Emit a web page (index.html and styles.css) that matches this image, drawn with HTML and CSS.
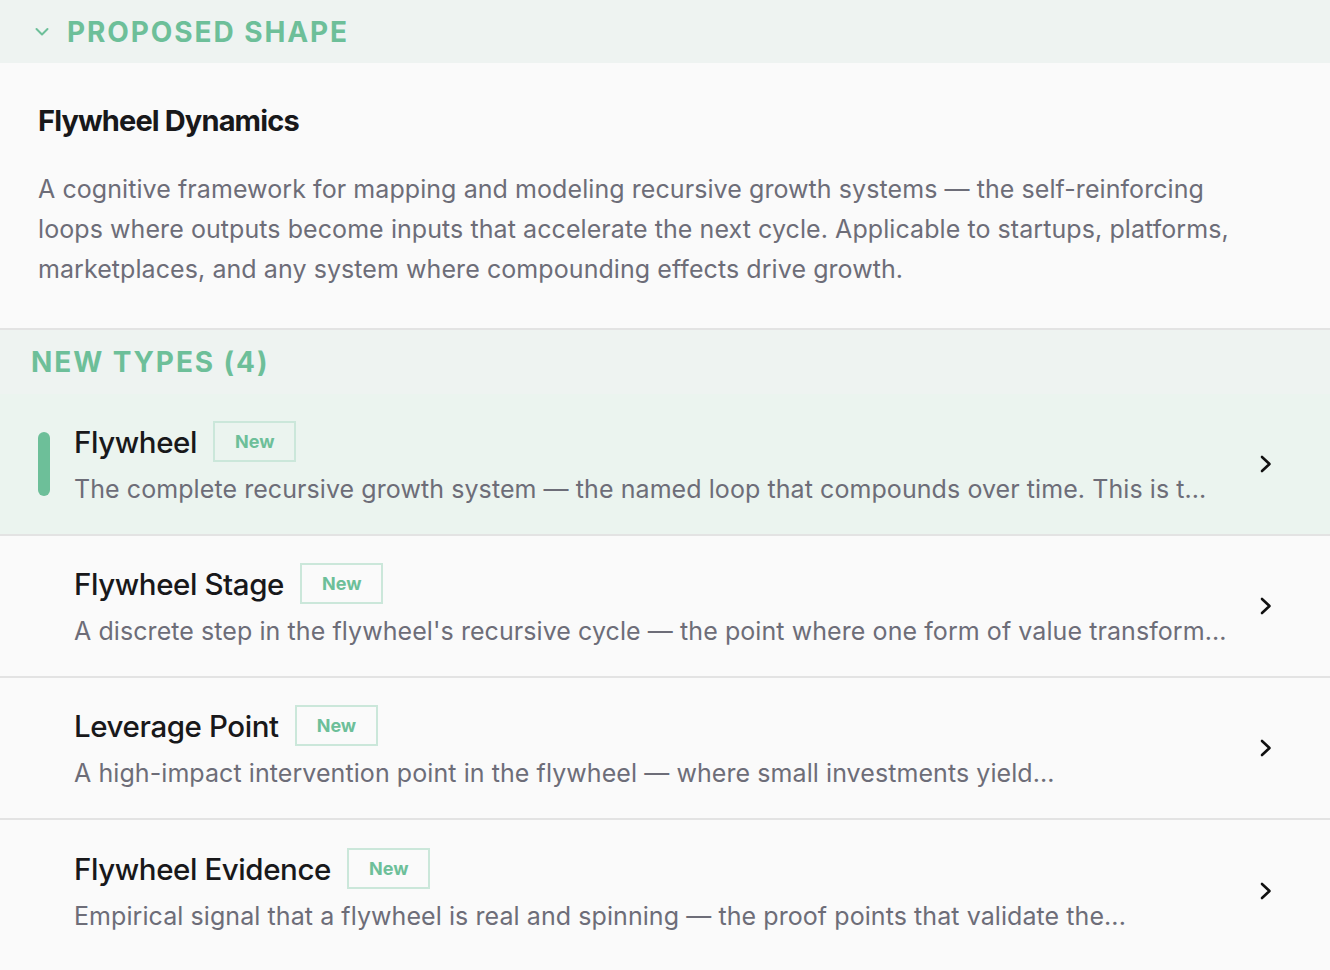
FILE: index.html
```html
<!DOCTYPE html>
<html lang="en">
<head>
<meta charset="utf-8">
<title>Proposed Shape</title>
<link rel="stylesheet" href="styles.css">
</head>
<body>
<div class="panel">
  <div class="section-header">
    <svg class="collapse-icon" width="14" height="10" viewBox="0 0 14 10" aria-hidden="true">
      <path d="M1.5 2 L7 7.5 L12.5 2" fill="none" stroke="currentColor" stroke-width="2" stroke-linecap="round" stroke-linejoin="round"/>
    </svg>
    <span class="section-label">PROPOSED SHAPE</span>
  </div>

  <div class="shape">
    <h1 class="shape-title">Flywheel Dynamics</h1>
    <p class="shape-desc">A cognitive framework for mapping and modeling recursive growth systems — the self-reinforcing loops where outputs become inputs that accelerate the next cycle. Applicable to startups, platforms, marketplaces, and any system where compounding effects drive growth.</p>
  </div>

  <div class="types-header">
    <span class="section-label">NEW TYPES (4)</span>
  </div>

  <ul class="type-list">
    <li class="type-row selected">
      <span class="marker"></span>
      <div class="type-body">
        <div class="type-head">
          <span class="type-name">Flywheel</span>
          <span class="badge">New</span>
        </div>
        <div class="type-desc">The complete recursive growth system — the named loop that compounds over time. This is t...</div>
      </div>
      <svg class="chev" width="12" height="18" viewBox="0 0 12 18" aria-hidden="true"><path d="M2 2 L9.5 9 L2 16" fill="none" stroke="currentColor" stroke-width="2.6" stroke-linecap="round" stroke-linejoin="round"/></svg>
    </li>
    <li class="type-row">
      <span class="marker"></span>
      <div class="type-body">
        <div class="type-head">
          <span class="type-name">Flywheel Stage</span>
          <span class="badge">New</span>
        </div>
        <div class="type-desc">A discrete step in the flywheel's recursive cycle — the point where one form of value transform...</div>
      </div>
      <svg class="chev" width="12" height="18" viewBox="0 0 12 18" aria-hidden="true"><path d="M2 2 L9.5 9 L2 16" fill="none" stroke="currentColor" stroke-width="2.6" stroke-linecap="round" stroke-linejoin="round"/></svg>
    </li>
    <li class="type-row">
      <span class="marker"></span>
      <div class="type-body">
        <div class="type-head">
          <span class="type-name">Leverage Point</span>
          <span class="badge">New</span>
        </div>
        <div class="type-desc">A high-impact intervention point in the flywheel — where small investments yield...</div>
      </div>
      <svg class="chev" width="12" height="18" viewBox="0 0 12 18" aria-hidden="true"><path d="M2 2 L9.5 9 L2 16" fill="none" stroke="currentColor" stroke-width="2.6" stroke-linecap="round" stroke-linejoin="round"/></svg>
    </li>
    <li class="type-row">
      <span class="marker"></span>
      <div class="type-body">
        <div class="type-head">
          <span class="type-name">Flywheel Evidence</span>
          <span class="badge">New</span>
        </div>
        <div class="type-desc">Empirical signal that a flywheel is real and spinning — the proof points that validate the...</div>
      </div>
      <svg class="chev" width="12" height="18" viewBox="0 0 12 18" aria-hidden="true"><path d="M2 2 L9.5 9 L2 16" fill="none" stroke="currentColor" stroke-width="2.6" stroke-linecap="round" stroke-linejoin="round"/></svg>
    </li>
  </ul>
</div>
</body>
</html>
```

FILE: styles.css
```css
* { box-sizing: border-box; }

html, body {
  margin: 0;
  padding: 0;
  background: #fafafa;
}

body {
  font-family: Inter, "Liberation Sans", sans-serif;
  color: #1b1b1d;
  -webkit-font-smoothing: antialiased;
}

.panel {
  width: 1330px;
  min-height: 970px;
  background: #fafafa;
  overflow: hidden;
}

.section-header {
  height: 63px;
  background: #eef3f1;
  display: flex;
  align-items: center;
  padding-left: 35px;
  gap: 18px;
  color: #6dbf99;
}

.collapse-icon {
  display: block;
  color: #6dbf99;
  margin-top: 1px;
}

.section-label {
  font-size: 28px;
  font-weight: 700;
  letter-spacing: 0.068em;
  color: #6dbf99;
  line-height: 1;
}

.shape {
  padding: 38px 84px 39px 38px;
  border-bottom: 2px solid #e3e3e3;
}

.shape-title {
  margin: 0;
  font-size: 29px;
  line-height: 40px;
  font-weight: 650;
  letter-spacing: -0.03em;
  color: #18181a;
}

.shape-desc {
  margin: 28px 0 0;
  font-size: 25px;
  line-height: 40px;
  font-weight: 400;
  letter-spacing: 0.003em;
  color: #6d6d78;
}

.types-header {
  height: 64px;
  background: #eef3f1;
  display: flex;
  align-items: center;
  padding-left: 31px;
}

.type-list {
  list-style: none;
  margin: 0;
  padding: 0;
}

.type-row {
  height: 142px;
  display: flex;
  align-items: center;
  padding: 0 58px 0 38px;
  border-bottom: 2px solid #e3e3e3;
}

.type-row:last-child {
  border-bottom: none;
}

.type-row.selected {
  background: #ebf4ef;
}

.marker {
  flex: none;
  width: 12px;
  height: 64px;
  border-radius: 6px;
  background: transparent;
  margin-right: 24px;
}

.selected .marker {
  background: #6dbf99;
}

.type-body {
  flex: 1;
  min-width: 0;
}

.type-head {
  display: flex;
  align-items: center;
  gap: 16px;
}

.type-name {
  font-size: 29.5px;
  line-height: 40px;
  font-weight: 550;
  letter-spacing: -0.014em;
  color: #18181a;
}

.badge {
  display: inline-flex;
  align-items: center;
  height: 41px;
  padding: 0 20px;
  border: 2px solid #cbe7da;
  font-size: 18px;
  font-weight: 700;
  color: #6dbf99;
}

.type-desc {
  margin-top: 9px;
  font-size: 25px;
  line-height: 36px;
  letter-spacing: 0.003em;
  color: #6d6d78;
  white-space: nowrap;
}

.chev {
  flex: none;
  display: block;
  color: #111;
  margin-left: 40px;
}
```
